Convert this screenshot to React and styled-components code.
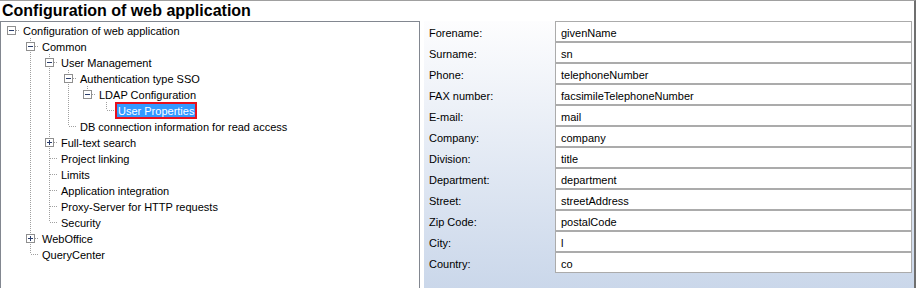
import React from 'react';
import styled, { createGlobalStyle } from 'styled-components';

const GlobalStyle = createGlobalStyle`
  html, body {
    margin: 0;
    padding: 0;
    background: #ffffff;
  }
  * {
    box-sizing: border-box;
  }
`;

const tree = [
  {
    label: 'Configuration of web application',
    expanded: true,
    children: [
      {
        label: 'Common',
        expanded: true,
        children: [
          {
            label: 'User Management',
            expanded: true,
            children: [
              {
                label: 'Authentication type SSO',
                expanded: true,
                children: [
                  {
                    label: 'LDAP Configuration',
                    expanded: true,
                    children: [{ label: 'User Properties', selected: true }],
                  },
                ],
              },
              { label: 'DB connection information for read access' },
            ],
          },
          { label: 'Full-text search', children: [{ label: 'x' }] },
          { label: 'Project linking' },
          { label: 'Limits' },
          { label: 'Application integration' },
          { label: 'Proxy-Server for HTTP requests' },
          { label: 'Security' },
        ],
      },
      { label: 'WebOffice', children: [{ label: 'x' }] },
      { label: 'QueryCenter' },
    ],
  },
];

const fields = [
  ['Forename:', 'givenName'],
  ['Surname:', 'sn'],
  ['Phone:', 'telephoneNumber'],
  ['FAX number:', 'facsimileTelephoneNumber'],
  ['E-mail:', 'mail'],
  ['Company:', 'company'],
  ['Division:', 'title'],
  ['Department:', 'department'],
  ['Street:', 'streetAddress'],
  ['Zip Code:', 'postalCode'],
  ['City:', 'l'],
  ['Country:', 'co'],
];

const flatten = (nodes, level, guides, out) => {
  nodes.forEach((n, i) => {
    const first = i === 0;
    const last = i === nodes.length - 1;
    out.push({ ...n, level, guides, first, last });
    if (n.children && n.expanded) flatten(n.children, level + 1, [...guides, !last], out);
  });
  return out;
};

const LINE = '#a0a0a0';

const Guide = ({ on }) => (
  <svg width='19' height='16'>
    {on && <line x1='10.5' y1='0' x2='10.5' y2='16' stroke={LINE} strokeDasharray='1 1' />}
  </svg>
);

const Connector = ({ top, bottom, hasChildren, expanded }) => (
  <svg width='19' height='16'>
    {top && <line x1='10.5' y1='0' x2='10.5' y2='8' stroke={LINE} strokeDasharray='1 1' />}
    {bottom && <line x1='10.5' y1='8' x2='10.5' y2='16' stroke={LINE} strokeDasharray='1 1' />}
    <line x1='11' y1='8.5' x2='19' y2='8.5' stroke={LINE} strokeDasharray='1 1' />
    {hasChildren && (
      <g>
        <rect x='6.5' y='4.5' width='8' height='8' fill='#fff' stroke='#8f8f8f' />
        <line x1='8' y1='8.5' x2='13' y2='8.5' stroke='#2a3d6b' />
        {!expanded && <line x1='10.5' y1='6' x2='10.5' y2='11' stroke='#2a3d6b' />}
      </g>
    )}
  </svg>
);

const App = () => {
  const rows = flatten(tree, 0, [], []);
  return (
    <>
      <GlobalStyle />
      <Frame>
        <Title>Configuration of web application</Title>
        <Body>
          <TreePanel>
            {rows.map((r, i) => (
              <TreeRow key={i}>
                {r.guides.map((g, k) => (
                  <Guide key={k} on={g} />
                ))}
                <Connector
                  top={r.level > 0 || !r.first}
                  bottom={!r.last}
                  hasChildren={!!r.children}
                  expanded={r.expanded}
                />
                <NodeLabel $selected={r.selected}>{r.label}</NodeLabel>
              </TreeRow>
            ))}
          </TreePanel>
          <PropsPanel>
            {fields.map(([label, value]) => (
              <React.Fragment key={label}>
                <FieldLabel>{label}</FieldLabel>
                <FieldBox>{value}</FieldBox>
              </React.Fragment>
            ))}
          </PropsPanel>
        </Body>
      </Frame>
    </>
  );
};

const Frame = styled.div`
  width: 916px;
  height: 288px;
  overflow: hidden;
  display: flex;
  flex-direction: column;
  border-top: 1px solid #a0a0a0;
  border-right: 2px solid #6f6f6f;
  font-family: 'Liberation Sans', Arial, sans-serif;
  color: #000;
`;

const Title = styled.div`
  height: 21px;
  line-height: 20px;
  padding-left: 2px;
  font-size: 16px;
  font-weight: bold;
  white-space: nowrap;
`;

const Body = styled.div`
  display: flex;
  gap: 4px;
  flex: 1;
`;

const TreePanel = styled.div`
  width: 420px;
  height: 268px;
  flex-shrink: 0;
  border: 1px solid #828790;
  background: #fff;
  font-size: 11px;
`;

const TreeRow = styled.div`
  display: flex;
  align-items: center;
  height: 16px;
  svg {
    display: block;
    flex-shrink: 0;
  }
`;

const NodeLabel = styled.span`
  height: 17px;
  line-height: 13px;
  padding: 1px 1px 0;
  margin-top: 1px;
  border: 2px solid ${(p) => (p.$selected ? '#e8101c' : 'transparent')};
  background: ${(p) => (p.$selected ? '#3399ff' : 'transparent')};
  color: ${(p) => (p.$selected ? '#fff' : '#000')};
  white-space: nowrap;
`;

const PropsPanel = styled.div`
  flex: 1;
  display: grid;
  grid-template-columns: 126px 357px;
  grid-auto-rows: 21px;
  align-content: start;
  padding: 0 2px 0 5px;
  background: linear-gradient(to bottom, #fdfdfe 0%, #cad7ea 100%);
  font-size: 11px;
`;

const FieldLabel = styled.div`
  display: flex;
  align-items: center;
  padding-top: 2px;
  white-space: nowrap;
`;

const FieldBox = styled.div`
  display: flex;
  align-items: center;
  padding: 2px 0 0 5px;
  border: 1px solid #ababab;
  background: #fff;
  white-space: nowrap;
`;

export default App;
